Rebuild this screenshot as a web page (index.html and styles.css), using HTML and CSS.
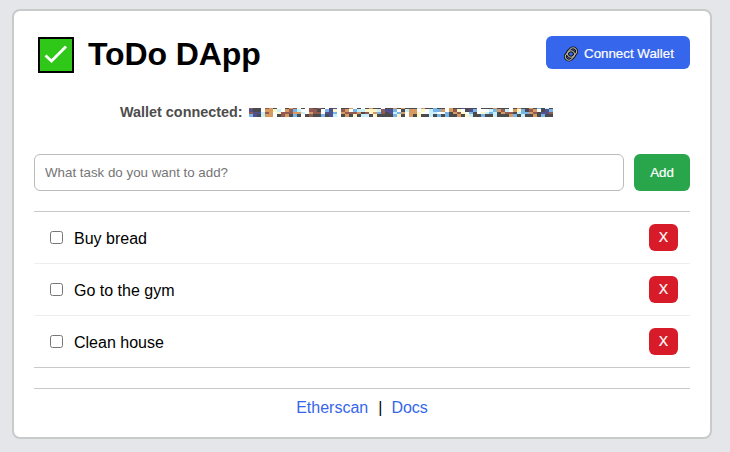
FILE: index.html
```html
<!DOCTYPE html>
<html lang="en">
<head>
<meta charset="utf-8">
<title>ToDo DApp</title>
<link rel="stylesheet" href="styles.css">
</head>
<body>
<main class="card">
  <header class="header">
    <div class="brand">
      <svg class="logo" viewBox="0 0 36 36" aria-hidden="true"><rect width="36" height="36" fill="#000"/><rect x="2" y="2" width="32" height="32" fill="#2fc718"/><path d="M7.5 18.5l6 5.5L28 9.5" fill="none" stroke="#fff" stroke-width="2.8"/></svg>
      <h1 class="title">ToDo DApp</h1>
    </div>
    <button class="connect"><svg class="chain" viewBox="0 0 16 16" aria-hidden="true"><g fill="none" stroke="#111" stroke-width="3"><rect x="4" y="3" width="10" height="7" rx="3.5" transform="rotate(-45 9 6.5)"/><rect x="2" y="6" width="10" height="7" rx="3.5" transform="rotate(-45 7 9.5)"/></g><g fill="none" stroke="#b9b5a8" stroke-width="1"><rect x="4" y="3" width="10" height="7" rx="3.5" transform="rotate(-45 9 6.5)"/><rect x="2" y="6" width="10" height="7" rx="3.5" transform="rotate(-45 7 9.5)"/></g></svg><span>Connect Wallet</span></button>
  </header>
  <div class="wallet"><span>Wallet connected:</span><svg class="address" viewBox="0 0 304 9" shape-rendering="crispEdges" aria-hidden="true"></svg></div>
  <form class="entry">
    <input class="field" type="text" placeholder="What task do you want to add?">
    <button class="add" type="button">Add</button>
  </form>
  <ul class="tasks">
    <li class="task"><input class="check" type="checkbox"><span class="name">Buy bread</span><button class="remove">X</button></li>
    <li class="task"><input class="check" type="checkbox"><span class="name">Go to the gym</span><button class="remove">X</button></li>
    <li class="task"><input class="check" type="checkbox"><span class="name">Clean house</span><button class="remove">X</button></li>
  </ul>
  <footer class="footer"><a href="#">Etherscan</a><span class="bar">|</span><a href="#">Docs</a></footer>
</main>
<script src="script.js"></script>
</body>
</html>
```
FILE: styles.css
```css
* { box-sizing: border-box; }
body {
  margin: 0;
  padding: 9px 0 0 12px;
  background: #e5e6ea;
  color: #000;
  font: 16px/18px "Liberation Sans", Arial, sans-serif;
  overflow: hidden;
}
.card {
  width: 700px;
  height: 430px;
  padding: 25px 20px 0;
  background: #fff;
  border: 2px solid #c9caca;
  border-radius: 8px;
}
.header { display: flex; justify-content: space-between; align-items: flex-start; height: 38px; }
.brand { display: flex; align-items: center; gap: 14px; height: 37px; padding-left: 4px; }
.logo { width: 36px; height: 36px; }
.title { margin: 0; font-size: 32px; line-height: 37px; font-weight: 700; letter-spacing: -0.1px; }
button { border: 0; padding: 0; color: #fff; font: 500 13.333px/15px "Liberation Sans", Arial, sans-serif; border-radius: 6px; -webkit-text-stroke: 0.2px #fff; }
.connect {
  display: flex;
  align-items: center;
  width: 144px;
  height: 33px;
  padding: 2px 0 0 17px;
  gap: 5px;
  background: #3666eb;
  white-space: nowrap;
}
.chain { width: 16px; height: 16px; flex: none; }
.wallet {
  display: flex;
  align-items: center;
  height: 18px;
  margin: 29px 0 33px 86px;
  color: #4d4d4d;
  font-size: 14.4px;
  font-weight: 700;
}
.wallet span { width: 129px; white-space: nowrap; }
.address { width: 304px; height: 9px; }
.entry { display: flex; gap: 10px; height: 37px; margin: 0; }
.field {
  flex: 1;
  min-width: 0;
  padding: 0 10px;
  border: 1px solid #bbb;
  border-radius: 6px;
  background: #fff;
  font: 13.333px/15px "Liberation Sans", Arial, sans-serif;
}
.field::placeholder { color: #757575; }
.add { width: 56px; background: #29a54c; }
.tasks { margin: 20px 0 0; padding: 0; list-style: none; border-top: 1px solid #c9c9c9; border-bottom: 1px solid #c9c9c9; }
.task { display: flex; align-items: center; height: 52px; padding: 0 12px 0 16px; border-bottom: 1px solid #eee; }
.task:last-child { height: 51px; border-bottom: 0; }
.check { width: 13px; height: 13px; margin: 0 11px 0 0; }
.name { flex: 1; padding-top: 2px; }
.remove { width: 29px; height: 27px; background: #d71b29; font-size: 14px; }
.footer { display: flex; justify-content: center; margin-top: 20px; padding-top: 10px; border-top: 1px solid #c9c9c9; }
.footer a { color: #3666eb; text-decoration: none; }
.bar { margin: 0 9px 0 10px; }
```
FILE: script.js
```js
// Draws the masked wallet address as a mosaic of 4px wide cells.
const colors = { K: "#4b4b4e", N: "#50518f", O: "#d79a60", B: "#925a50", b: "#76b5ea", c: "#c7f0fb", y: "#fff5c5" };
const rows = [
  [0, 1, "BKK.BOK..KOB.K.BKBK.KN.KKO.K.KOKK.KKOKOKKKcOKKbKK.OKKNKKK.KKKOKKK.KOKKOKbKcK"],
  [1, 3, "NKK.OOyc.OBbc..BBK.bNy.BO.bccyyycBNNb.KcOO.y.cbbO.OBy.KNb...cbOBc.OybKBO.KNb"],
  [4, 2, "BNNcBO.yBBBOOc.OBB.NNb.OBBBOKByObBKNcbO.OOy..cc..bKOBy.bK.ycbcKOBBKcbbOBKNNBK"],
  [6, 3, "bNKcOO.KBOKbK.KBKKbKNc.KOKyKccKyKKKKbyK.OKyKKcKbKbKKOKycKKbKKcKKKObKcKKOKbKKb"]
];
const cells = [];
for (const [y, height, row] of rows) {
  [...row].slice(0, 76).forEach((key, i) => {
    if (colors[key]) cells.push(`<rect x="${i * 4}" y="${y}" width="4" height="${height}" fill="${colors[key]}"/>`);
  });
}
document.querySelector(".address").innerHTML = cells.join("");
```
